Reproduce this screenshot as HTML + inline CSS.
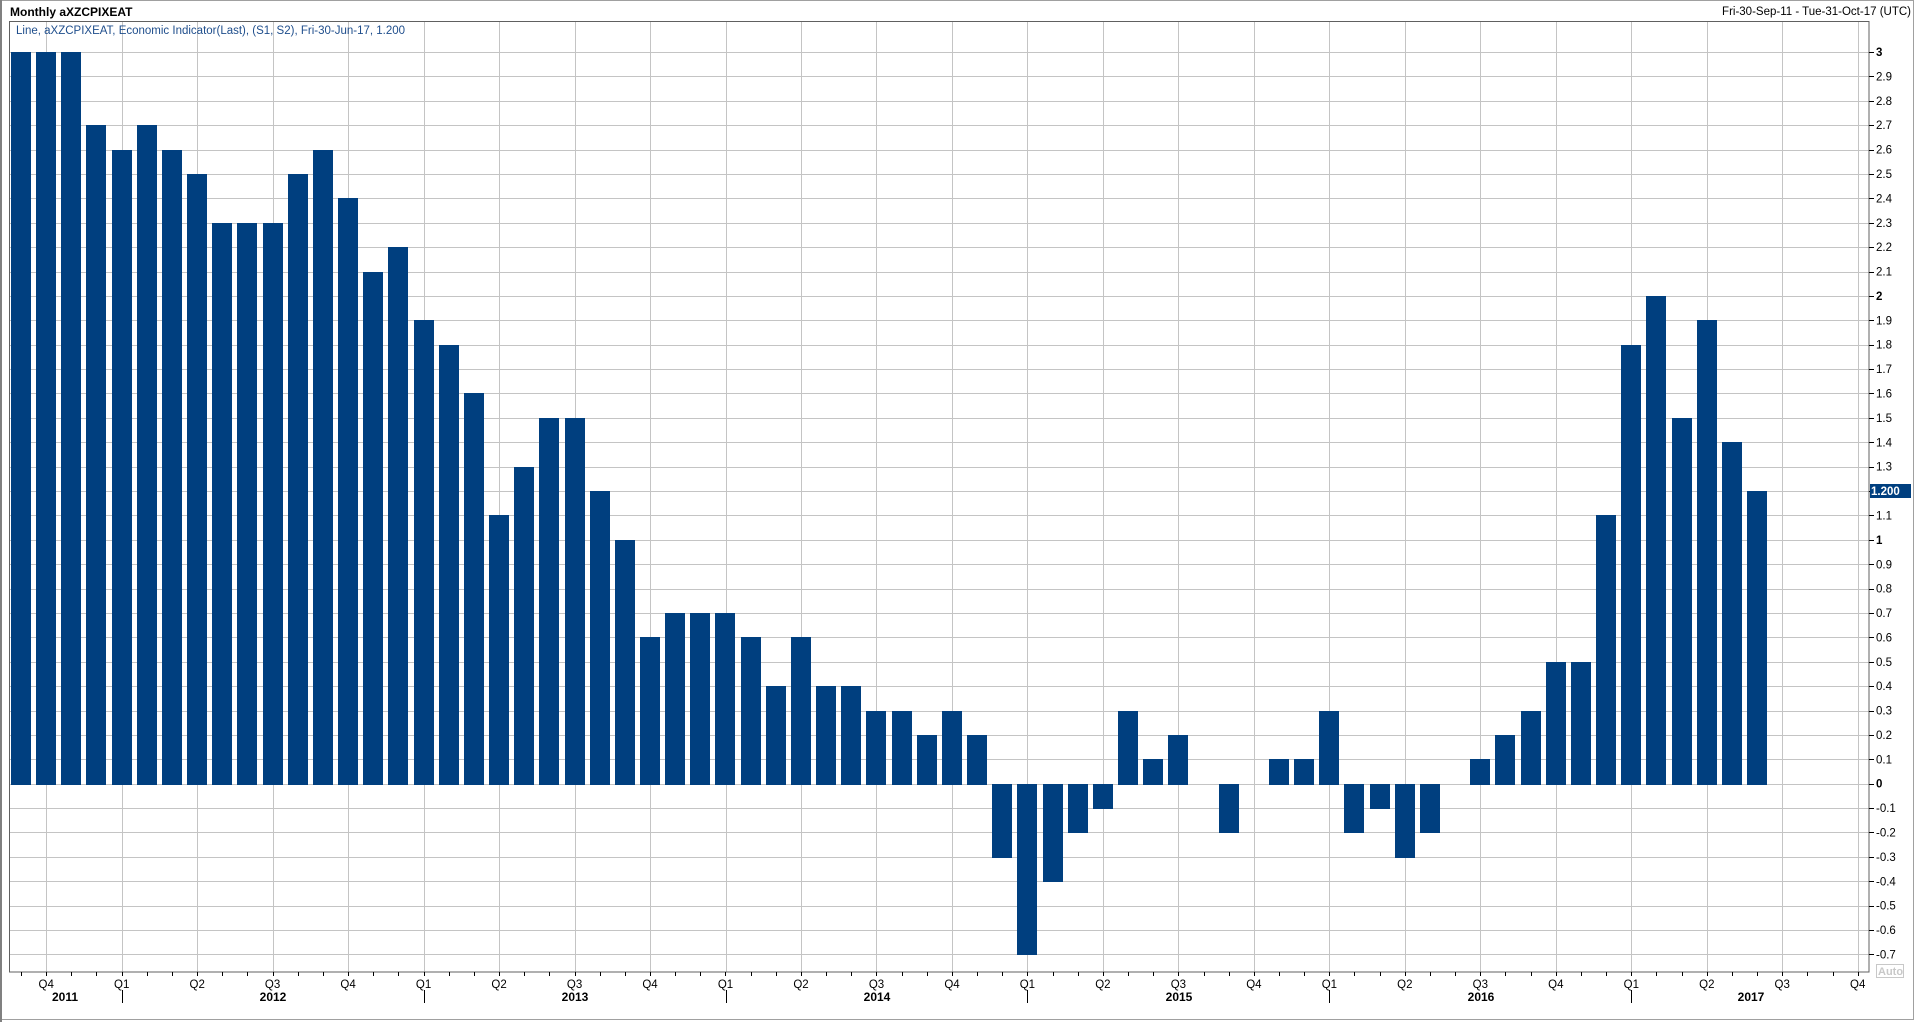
<!DOCTYPE html>
<html><head><meta charset="utf-8">
<style>
html,body{margin:0;padding:0;background:#fff;}
body{width:1916px;height:1022px;overflow:hidden;position:relative;font-family:"Liberation Sans","DejaVu Sans",sans-serif;}
svg{position:absolute;left:0;top:0;}
text{font-family:"Liberation Sans","DejaVu Sans",sans-serif;}
</style></head>
<body>
<svg id="s" width="1916" height="1022" xmlns="http://www.w3.org/2000/svg">
<rect x="0" y="0" width="1916" height="1022" fill="#fff"/>
<rect x="0.5" y="0.5" width="1913" height="1019" fill="none" stroke="#a0a0a0"/>
<rect x="0" y="0" width="2" height="1022" fill="#808080"/>
<g id="grid"></g>
<g id="bars"></g>
<rect x="9.5" y="21.5" width="1859.5" height="950.5" fill="none" stroke="#606060" stroke-width="1"/>
<g id="ticks"></g>
<text x="10" y="16" font-size="12" font-weight="bold" fill="#000">Monthly aXZCPIXEAT</text>
<text x="1911" y="15" font-size="11.5" fill="#000" text-anchor="end">Fri-30-Sep-11 - Tue-31-Oct-17 (UTC)</text>
<text x="16" y="34" font-size="11.5" fill="#1f4e8c">Line, aXZCPIXEAT, Economic Indicator(Last), (S1, S2), Fri-30-Jun-17, 1.200</text>
<g font-size="11.5" fill="#000">
<text x="1876" y="56" font-weight="bold">3</text>
<text x="1876" y="80.4">2.9</text>
<text x="1876" y="104.8">2.8</text>
<text x="1876" y="129.2">2.7</text>
<text x="1876" y="153.6">2.6</text>
<text x="1876" y="178">2.5</text>
<text x="1876" y="202.4">2.4</text>
<text x="1876" y="226.8">2.3</text>
<text x="1876" y="251.2">2.2</text>
<text x="1876" y="275.6">2.1</text>
<text x="1876" y="300" font-weight="bold">2</text>
<text x="1876" y="324.3">1.9</text>
<text x="1876" y="348.7">1.8</text>
<text x="1876" y="373.1">1.7</text>
<text x="1876" y="397.5">1.6</text>
<text x="1876" y="421.9">1.5</text>
<text x="1876" y="446.3">1.4</text>
<text x="1876" y="470.7">1.3</text>
<text x="1876" y="519.5">1.1</text>
<text x="1876" y="543.9" font-weight="bold">1</text>
<text x="1876" y="568.3">0.9</text>
<text x="1876" y="592.6">0.8</text>
<text x="1876" y="617">0.7</text>
<text x="1876" y="641.4">0.6</text>
<text x="1876" y="665.8">0.5</text>
<text x="1876" y="690.2">0.4</text>
<text x="1876" y="714.6">0.3</text>
<text x="1876" y="739">0.2</text>
<text x="1876" y="763.4">0.1</text>
<text x="1876" y="787.7" font-weight="bold">0</text>
<text x="1876" y="812.1">-0.1</text>
<text x="1876" y="836.5">-0.2</text>
<text x="1876" y="860.9">-0.3</text>
<text x="1876" y="885.3">-0.4</text>
<text x="1876" y="909.7">-0.5</text>
<text x="1876" y="934">-0.6</text>
<text x="1876" y="958.4">-0.7</text>
</g>
<rect x="1870" y="484" width="41" height="14" fill="#003f7f"/>
<text x="1871" y="495" font-size="11.5" font-weight="bold" fill="#fff">1.200</text>
<rect x="1876.5" y="964.5" width="27" height="13" fill="#fff" stroke="#c8c8c8"/>
<text x="1878" y="975" font-size="11" font-weight="bold" fill="#c8c8c8">Auto</text>
<g font-size="11.5" fill="#000" text-anchor="middle">
<text x="46.2" y="988">Q4</text><text x="121.7" y="988">Q1</text><text x="197.2" y="988">Q2</text><text x="272.6" y="988">Q3</text>
<text x="348.1" y="988">Q4</text><text x="423.6" y="988">Q1</text><text x="499.1" y="988">Q2</text><text x="574.6" y="988">Q3</text>
<text x="650" y="988">Q4</text><text x="725.5" y="988">Q1</text><text x="801" y="988">Q2</text><text x="876.5" y="988">Q3</text>
<text x="952" y="988">Q4</text><text x="1027.4" y="988">Q1</text><text x="1102.9" y="988">Q2</text><text x="1178.4" y="988">Q3</text>
<text x="1253.9" y="988">Q4</text><text x="1329.4" y="988">Q1</text><text x="1404.8" y="988">Q2</text><text x="1480.3" y="988">Q3</text>
<text x="1555.8" y="988">Q4</text><text x="1631.3" y="988">Q1</text><text x="1706.8" y="988">Q2</text><text x="1782.2" y="988">Q3</text>
<text x="1857.7" y="988">Q4</text>
</g>
<g font-size="12" font-weight="bold" fill="#000" text-anchor="middle">
<text x="65" y="1001">2011</text><text x="273" y="1001">2012</text><text x="575" y="1001">2013</text>
<text x="877" y="1001">2014</text><text x="1179" y="1001">2015</text><text x="1481" y="1001">2016</text><text x="1751" y="1001">2017</text>
</g>
</svg>
<script>
var NS="http://www.w3.org/2000/svg";
function el(p,t,a){var e=document.createElementNS(NS,t);for(var k in a)e.setAttribute(k,a[k]);p.appendChild(e);return e;}
var grid=document.getElementById('grid'),bars=document.getElementById('bars'),ticks=document.getElementById('ticks');
function Y(v){return 783.7-v*243.9;}
for(var i=-7;i<=30;i++){var y=Math.round(Y(i/10))+0.5;el(grid,'line',{x1:10,x2:1869,y1:y,y2:y,stroke:'#c4c4c4','stroke-width':1});
 el(ticks,'line',{x1:1869,x2:1874,y1:y,y2:y,stroke:'#000','stroke-width':1});}
for(var k=0;k<25;k++){var x=Math.round(46.2+75.48*k)+0.5;el(grid,'line',{x1:x,x2:x,y1:22,y2:972,stroke:'#c4c4c4','stroke-width':1});}
for(var i=0;i<74;i++){var x=Math.round(21+25.16*i)+0.5;el(ticks,'line',{x1:x,x2:x,y1:972,y2:976,stroke:'#000','stroke-width':1});}
[1,5,9,13,17,21].forEach(function(k){var x=Math.round(46.2+75.48*k)+0.5;el(ticks,'line',{x1:x,x2:x,y1:990,y2:1003,stroke:'#000','stroke-width':1});});
var d=[3,3,3,2.7,2.6,2.7,2.6,2.5,2.3,2.3,2.3,2.5,2.6,2.4,2.1,2.2,1.9,1.8,1.6,1.1,1.3,1.5,1.5,1.2,1.0,0.6,0.7,0.7,0.7,0.6,0.4,0.6,0.4,0.4,0.3,0.3,0.2,0.3,0.2,-0.3,-0.7,-0.4,-0.2,-0.1,0.3,0.1,0.2,0,-0.2,0,0.1,0.1,0.3,-0.2,-0.1,-0.3,-0.2,0,0.1,0.2,0.3,0.5,0.5,1.1,1.8,2.0,1.5,1.9,1.4,1.2];
var z=Math.round(Y(0));
d.forEach(function(v,i){if(v==0)return;var x=Math.round(11+25.16*i);var t=Math.round(Y(v));
 var top,h; if(v>0){top=t;h=z+1-t;}else{top=z;h=t+1-z;}
 el(bars,'rect',{x:x,y:top,width:20,height:h,fill:'#003f7f'});});
</script>
</body></html>
